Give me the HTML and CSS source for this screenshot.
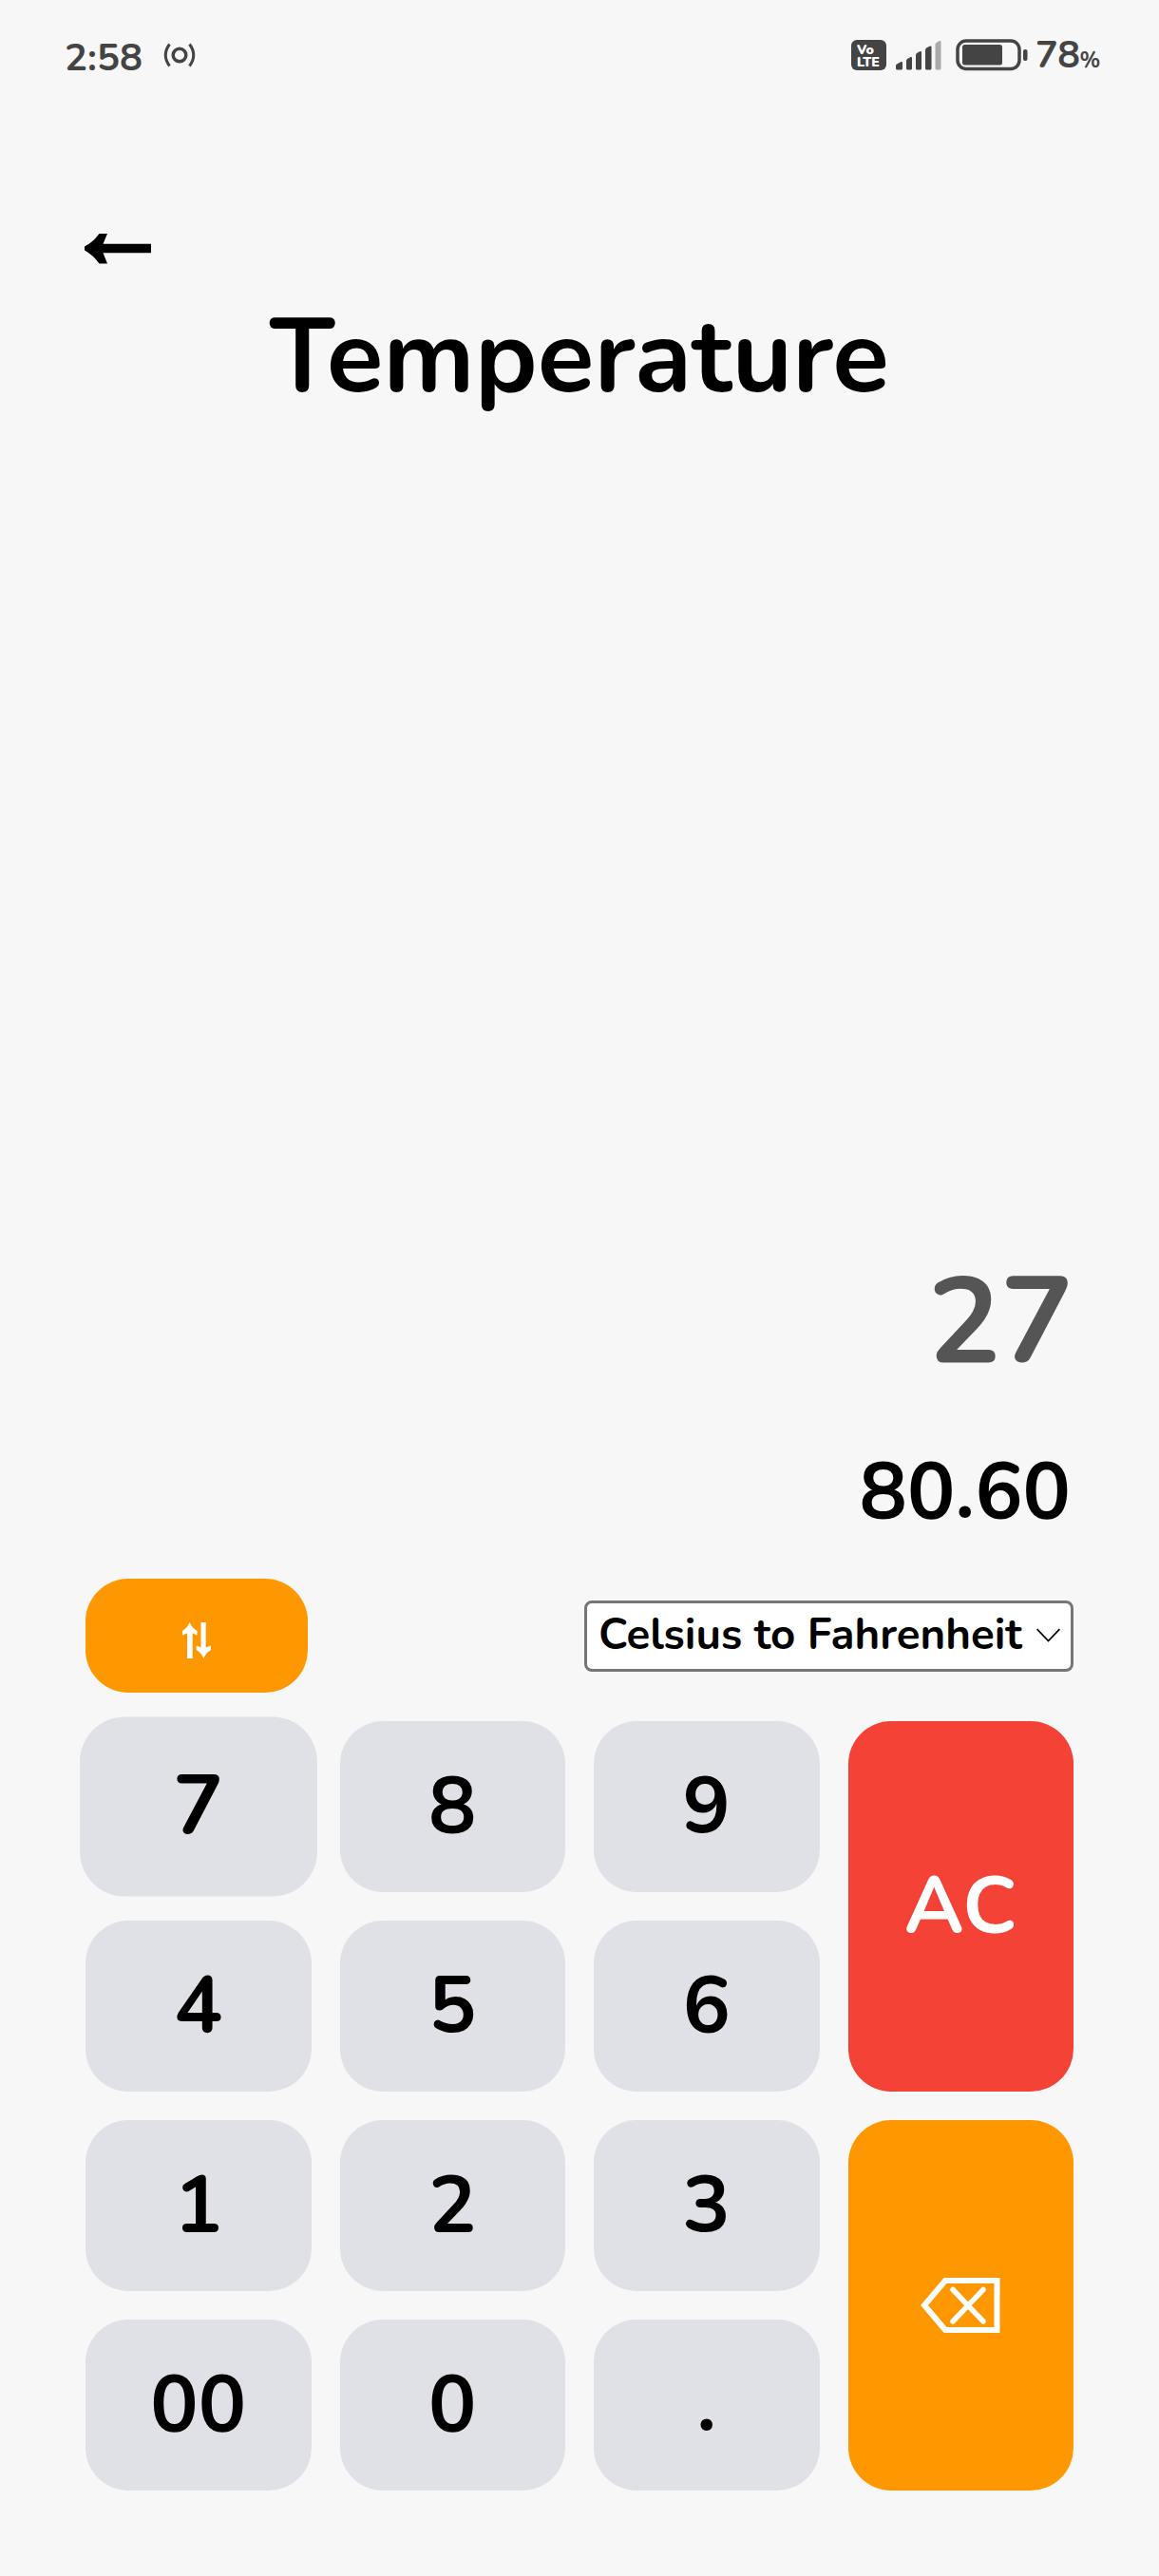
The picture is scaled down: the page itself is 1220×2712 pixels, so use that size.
FILE: index.html
```html
<!DOCTYPE html>
<html lang="en">
<head>
<meta charset="utf-8">
<title>Temperature</title>
<link rel="stylesheet" href="styles.css">
</head>
<body>
<header class="status">
  <span class="clock">2:58</span>
  <svg class="hotspot" width="34" height="28" viewBox="0 0 34 28" fill="none" stroke="#444" stroke-width="3">
    <circle cx="17" cy="14" r="6.800" stroke-width="3.500"/>
    <path d="M6.5 2.500Q-2 14 6.500 25.500M27.500 2.500Q36 14 27.500 25.500"/>
  </svg>
  <span class="volte"><span>Vo</span><span>LTE</span></span>
  <svg class="signal" width="49" height="32" viewBox="0 0 49 32" fill="#444">
    <path d="M0 27Q0 26 1 25.500L5.500 23Q7 22.500 7 24V30Q7 31.500 5.500 31.500H1.500Q0 31.500 0 30Z"/>
    <path d="M11 22Q11 21 12 20L15.500 18Q17 17.500 17 19V30Q17 31.500 15.500 31.500H12.500Q11 31.500 11 30Z"/>
    <path d="M21 16Q21 15 22 14L25.500 12Q27 11.500 27 13V30Q27 31.500 25.500 31.500H22.500Q21 31.500 21 30Z"/>
    <path d="M31 11Q31 9.500 32 8.500L36 6.500Q37.500 6 37.500 7.500V30Q37.500 31.500 36 31.500H32.500Q31 31.500 31 30Z"/>
    <path fill="#aaa" d="M41.500 5Q41.500 4 42.500 3L46 1Q47.500 .5 47.500 2V30Q47.500 31.500 46 31.500H43Q41.500 31.500 41.500 30Z"/>
  </svg>
  <svg class="battery" width="76" height="34" viewBox="0 0 76 34">
    <rect x="2" y="2" width="65" height="29.500" rx="9" fill="none" stroke="#444" stroke-width="3.500"/>
    <rect x="7" y="6" width="42" height="21.500" rx="2.500" fill="#444"/>
    <rect x="71" y="11" width="4.500" height="12" rx="2" fill="#444"/>
  </svg>
  <span class="percent">78<small>%</small></span>
</header>

<main class="app">
  <svg class="back" width="70" height="32" viewBox="0 0 70 32">
    <path d="M15.500 0H24L19.500 10.800H70V20.300H19.500L24 31.500H15.500Q9 22.500 0 17.500V13.500Q9 9 15.500 0Z"/>
  </svg>
  <h1 class="title">Temperature</h1>

  <section class="display">
    <div class="input">27</div>
    <div class="result">80.60</div>
  </section>

  <div class="controls">
    <button class="swap" aria-label="Swap">
      <svg width="30" height="38" viewBox="0 0 30 38" fill="#fff">
        <path d="M7.700 0Q10 6 15.500 9V13.500L10.700 11.500V38H5V11.500L0 13.500V9Q5 6 7.700 0Z"/>
        <path d="M22.300 38Q20 32 14.700 29V24.500L19.500 26.500V0H24.700V26.500L30 24.500V29Q25 32 22.300 38Z"/>
      </svg>
    </button>
    <div class="unit">
      <span>Celsius to Fahrenheit</span>
      <svg width="25" height="15" viewBox="0 0 25 15" fill="none" stroke="#000" stroke-width="1.700"><path d="M.6 1.200L12.500 13.500L24.400 1.200"/></svg>
    </div>
  </div>

  <div class="keypad">
    <button class="key pressed">7</button>
    <button class="key">8</button>
    <button class="key">9</button>
    <button class="key clear">AC</button>
    <button class="key">4</button>
    <button class="key">5</button>
    <button class="key">6</button>
    <button class="key">1</button>
    <button class="key">2</button>
    <button class="key">3</button>
    <button class="key delete" aria-label="Delete">
      <svg width="84" height="58" viewBox="0 0 84 58" fill="none" stroke="#fff" stroke-width="6">
        <path d="M26 3H80.500V55H26L4 29Z"/>
        <path stroke-width="5.500" stroke-linecap="round" d="M34 12.500L66 46M66 12.500L34 46"/>
      </svg>
    </button>
    <button class="key">00</button>
    <button class="key">0</button>
    <button class="key">.</button>
  </div>
</main>
</body>
</html>
```
FILE: styles.css
```css
* {
  box-sizing: border-box;
}

body {
  margin: 0;
  width: 1220px;
  height: 2712px;
  background: #f7f7f7;
  color: #000;
  font-family: Nunito, Lato, "Open Sans", sans-serif;
  font-weight: 700;
}

svg {
  display: block;
  flex: none;
}

button {
  margin: 0;
  padding: 0;
  border: 0;
  font: inherit;
  color: inherit;
}

.status {
  display: flex;
  align-items: center;
  height: 116px;
  padding: 0 60px 0 68px;
  color: #444;
}

.clock {
  width: 104px;
  padding-top: 5px;
  font-size: 40px;
  line-height: 50px;
  white-space: nowrap;
}

.volte {
  display: flex;
  flex-direction: column;
  align-items: flex-start;
  width: 37px;
  height: 32px;
  margin-left: auto;
  padding: 4px 0 0 6px;
  border-radius: 6px;
  background: #444;
  color: #fff;
  font-size: 14px;
  font-weight: 900;
  line-height: 13px;
}

.signal {
  margin-left: 10px;
}

.battery {
  margin-left: 14px;
}

.percent {
  width: 70px;
  margin-left: 8px;
  padding-top: 5px;
  font-size: 39.5px;
  line-height: 50px;
  letter-spacing: -0.5px;
  white-space: nowrap;
}

.percent small {
  font-size: 23px;
}

.app {
  padding: 130px 90px 0;
}

.back {
  margin-left: -1px;
}

.title {
  margin: 31px 0 0;
  font-size: 110px;
  line-height: 134px;
  text-align: center;
}

.display {
  padding-top: 874px;
  text-align: right;
}

.input {
  color: #555;
  font-size: 128px;
  line-height: 150px;
}

.result {
  margin-top: 54px;
  padding-right: 3px;
  font-size: 84px;
  line-height: 100px;
}

.controls {
  display: flex;
  align-items: center;
  justify-content: space-between;
  height: 120px;
  margin-top: 41px;
}

.swap {
  display: flex;
  align-items: center;
  justify-content: center;
  width: 234px;
  height: 120px;
  padding-top: 10px;
  border-radius: 45px;
  background: #ff9800;
}

.unit {
  display: flex;
  align-items: center;
  justify-content: space-between;
  width: 515px;
  height: 75px;
  padding: 0 11px 2px 12px;
  border: 3px solid #767676;
  border-radius: 8px;
  background: #fff;
  font-size: 45.7px;
  line-height: 54px;
  white-space: nowrap;
}

.keypad {
  display: grid;
  grid-template-columns: repeat(4, 1fr);
  grid-template-rows: repeat(4, 180px);
  gap: 30px;
  margin-top: 30px;
}

.key {
  display: flex;
  align-items: center;
  justify-content: center;
  border-radius: 45px;
  background: #e0e1e6;
  font-size: 84px;
  line-height: 100px;
}

.pressed {
  transform: scale(1.05);
}

.clear,
.delete {
  grid-row: span 2;
  color: #fff;
}

.clear {
  background: #f44336;
}

.delete {
  grid-column: 4;
  background: #ff9800;
}
```
